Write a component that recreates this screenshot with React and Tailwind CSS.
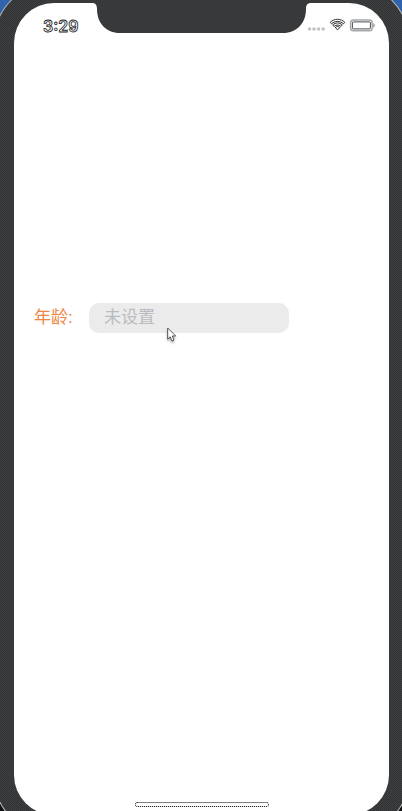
function StatusIcons() {
  return (
    <svg className="h-5 w-[70px] shrink-0" viewBox="0 0 70 20" fill="none">
      <g fill="#c3c3c6">
        <circle cx="2.5" cy="12" r="1.8" />
        <circle cx="7" cy="12" r="1.8" />
        <circle cx="11.6" cy="12" r="1.8" />
        <circle cx="16.2" cy="12" r="1.8" />
      </g>
      <g stroke="#15191d" strokeWidth="0.9" strokeLinejoin="round">
        <path d="M23.2 5.3 C27.3 1.3 33.7 1.3 37.8 5.3 L36.4 6.8 C32.9 3.6 28.1 3.6 24.6 6.8 Z" />
        <path d="M25.7 8 C28.6 5.3 32.4 5.3 35.3 8 L33.9 9.4 C31.7 7.6 29.3 7.6 27.1 9.4 Z" />
        <path d="M28.2 10.5 C29.7 9.2 31.3 9.2 32.8 10.5 L30.5 12.8 Z" />
      </g>
      <rect x="43.6" y="3.1" width="21.6" height="10.6" rx="2.8" stroke="#a5a9ac" strokeWidth="1.5" />
      <rect x="45.4" y="4.9" width="18" height="7" rx="1" stroke="#33383c" strokeWidth="0.9" />
      <path d="M66.5 6.4 C68.1 6.8 68.1 10 66.5 10.4 Z" fill="#a5a9ac" stroke="#a5a9ac" strokeWidth="0.6" />
    </svg>
  );
}

function Notch() {
  return (
    <svg className="block h-[30px] w-[219px]" viewBox="0 0 219 30">
      <path
        d="M0 0 C3.5 0 5 2 5 6 C5 20 14 30 28 30 H191 C205 30 214 20 214 6 C214 2 215.5 0 219 0 Z"
        fill="#38393b"
      />
    </svg>
  );
}

function Pointer() {
  return (
    <svg
      className="absolute left-[78px] top-[24px] h-[18px] w-[14px] drop-shadow-[0_2px_1px_rgba(0,0,0,0.3)]"
      viewBox="0 0 14 18"
    >
      <path
        d="M0.7 1 V12.1 L3.2 9.8 L5 14 L7 13.1 L5.3 9 H8.7 Z"
        fill="white"
        stroke="#444"
        strokeWidth="0.9"
      />
    </svg>
  );
}

export default function App() {
  return (
    <div className="h-[811px] w-[402px] overflow-hidden bg-[linear-gradient(#2f63ad_50%,#111_50%)] font-['Liberation_Sans','Noto_Sans_CJK_SC',sans-serif]">
      <div className="-ml-[6px] -mt-[17px] h-[852px] w-[415px] rounded-[60px] bg-[#38393b] bg-[conic-gradient(#323435_25%,#3d3e40_0_50%,#323435_0_75%,#3d3e40_0)] bg-[size:2px_2px] p-5 shadow-[0_0_0_1px_#bbb]">
        <main className="relative flex h-full flex-col overflow-hidden rounded-[40px] bg-white">
          <div className="absolute left-[78px] top-0">
            <Notch />
          </div>
          <header className="flex h-[40px] shrink-0 items-start justify-between pl-[29px] pr-[12px] pt-[14px]">
            <span className="font-['Inter',sans-serif] text-[16px] font-semibold leading-[19px] text-white [-webkit-text-stroke:0.8px_#15191d]">
              3:29
            </span>
            <StatusIcons />
          </header>
          <div className="mt-[260px] flex h-[30px] items-center pl-[20px]">
            <label className="w-[55px] text-[17px] leading-[30px] text-[#ed8543]">年龄:</label>
            <div className="relative h-[30px] w-[200px] rounded-[10px] bg-[#ebebeb] pl-[15px] text-[17px] leading-[29px] text-[#b9bbc0]">
              未设置
              <Pointer />
            </div>
          </div>
          <div className="mt-auto flex justify-center pb-[8px]">
            <div className="h-[5px] w-[134px] rounded-full border border-dotted border-black bg-white" />
          </div>
        </main>
      </div>
    </div>
  );
}
